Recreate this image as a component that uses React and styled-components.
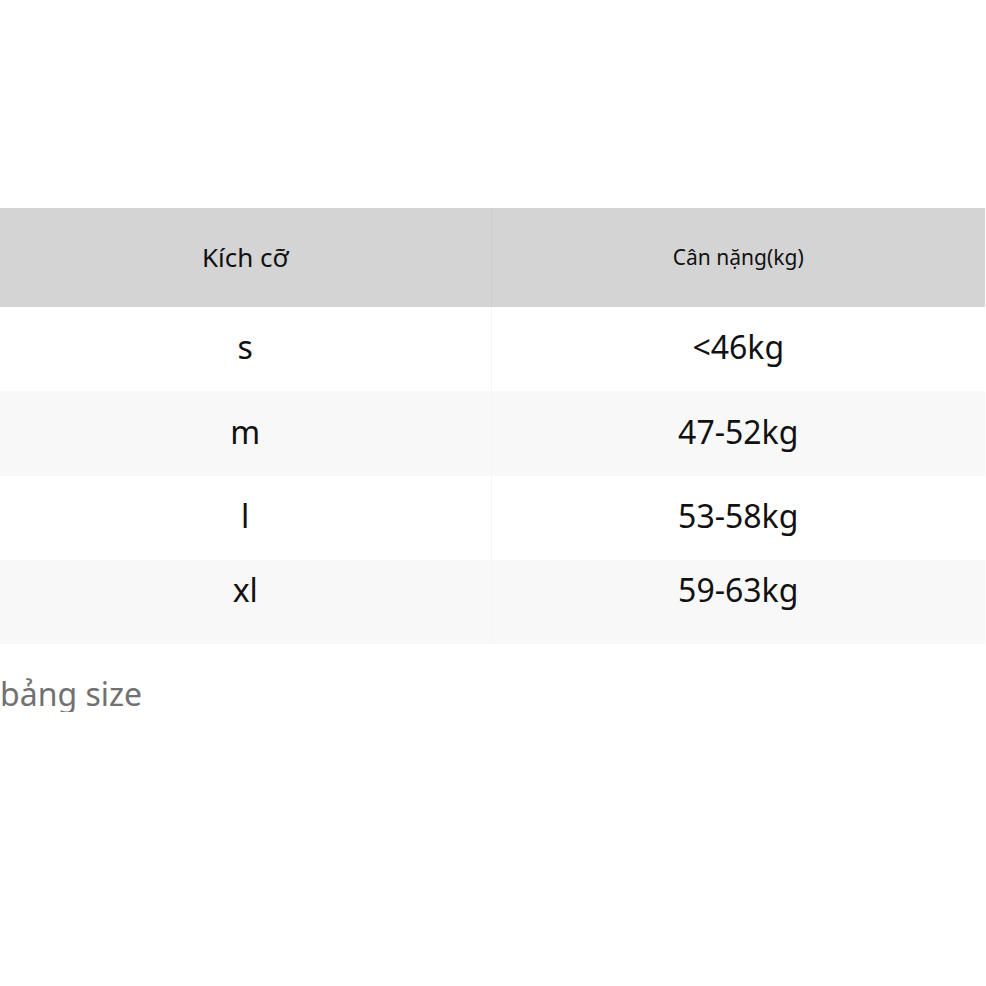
import React from "react";
import styled, { createGlobalStyle } from "styled-components";

const GlobalStyle = createGlobalStyle`
  html, body {
    margin: 0;
    padding: 0;
    background: #ffffff;
    font-family: "Noto Sans", "Open Sans", sans-serif;
  }
`;

const Page = styled.div`
  width: 986px;
  padding-top: 208px;
`;

const Table = styled.table`
  width: 985px;
  border-collapse: collapse;
  table-layout: fixed;
`;

const HeadCell = styled.th`
  height: 99px;
  padding: 0 0 2px;
  box-sizing: border-box;
  background: #d4d4d4;
  color: #111;
  font-weight: 400;
  font-size: ${(p) => p.size}px;
  text-align: center;
  vertical-align: middle;
  & + & {
    border-left: 1px solid #cdcdcd;
  }
`;

const Row = styled.tr`
  background: ${(p) => (p.striped ? "#f8f8f8" : "#ffffff")};
`;

const Cell = styled.td`
  height: ${(p) => p.h}px;
  padding: 0 0 ${(p) => (p.last ? 26 : 5)}px;
  box-sizing: border-box;
  text-align: center;
  vertical-align: middle;
  font-size: 32px;
  color: #111;
  & + & {
    border-left: 1px solid ${(p) => (p.striped ? "#f5f5f5" : "#ffffff")};
  }
`;

const Caption = styled.div`
  margin-top: 32px;
  font-size: 32px;
  line-height: 36px;
  color: #717171;
`;

const rows = [
  ["s", "<46kg", 84],
  ["m", "47-52kg", 85],
  ["l", "53-58kg", 84],
  ["xl", "59-63kg", 84],
];

export default function App() {
  return (
    <Page>
      <GlobalStyle />
      <Table>
        <colgroup>
          <col style={{ width: 491 }} />
          <col style={{ width: 494 }} />
        </colgroup>
        <thead>
          <tr>
            <HeadCell size={26}>Kích cỡ</HeadCell>
            <HeadCell size={21}>Cân nặng(kg)</HeadCell>
          </tr>
        </thead>
        <tbody>
          {rows.map(([size, weight, h], i) => {
            const striped = i % 2 === 1;
            const last = i === rows.length - 1;
            return (
              <Row key={size} striped={striped}>
                <Cell h={h} striped={striped} last={last}>{size}</Cell>
                <Cell h={h} striped={striped} last={last}>{weight}</Cell>
              </Row>
            );
          })}
        </tbody>
      </Table>
      <Caption>bảng size</Caption>
    </Page>
  );
}
